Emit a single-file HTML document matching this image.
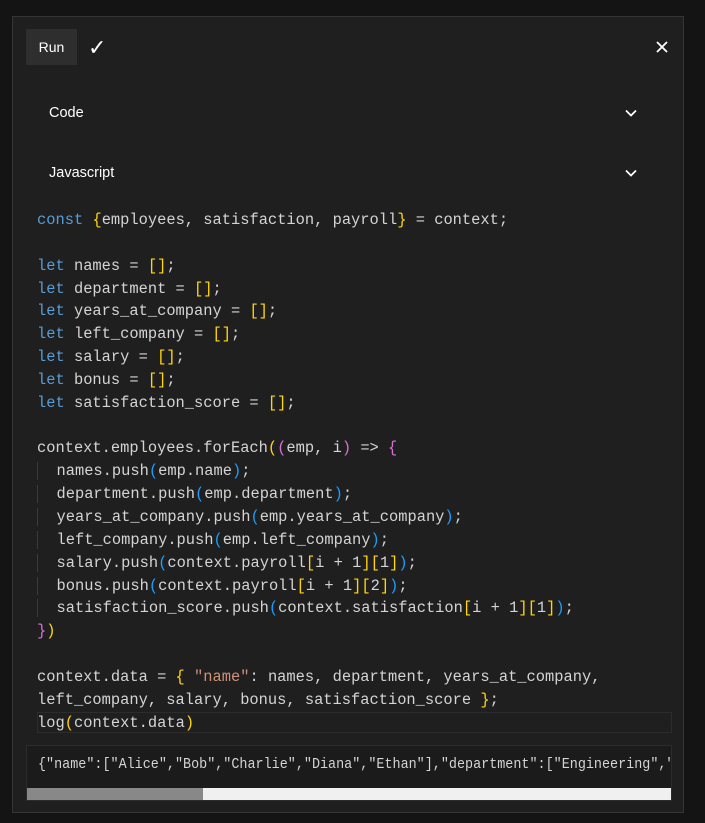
<!DOCTYPE html>
<html><head><style>
body{margin:0;width:705px;height:823px;background:#141414;position:relative;overflow:hidden;font-family:"Liberation Sans",sans-serif}
.panel{position:absolute;left:12px;top:16px;width:670px;height:795px;background:#1f1f1f;border:1px solid #353535}
.run{position:absolute;left:13px;top:12px;width:51px;height:36px;background:#2e2e2e;color:#fff;font-size:14px;line-height:36px;text-align:center}
.chk{position:absolute;left:75px;top:19px;color:#fff;font-size:22px;font-weight:bold;font-family:"DejaVu Sans",sans-serif}
.x{position:absolute;left:641px;top:22px}
.lbl{position:absolute;left:36px;color:#fff;font-size:14.5px}
.chev{position:absolute;left:611px}
pre{position:absolute;left:24px;top:192px;margin:0;font-family:"Liberation Mono",monospace;font-size:15.4px;line-height:22.85px;color:#d4d4d4}
.k{color:#569cd6}.y{color:#ffd700}.m{color:#da70d6}.b{color:#179fff}.s{color:#ce9178}
.logbox{position:absolute;left:24px;top:695px;width:633px;height:19px;border:1px solid #2c2c2c}
.out{position:absolute;left:13px;top:728px;width:644px;height:54px;background:#1b1b1b;border:1px solid #2c2c2c;overflow:hidden}
.out div.t{position:absolute;left:11px;top:11px;font-family:"Liberation Mono",monospace;font-size:14.6px;color:#d4d4d4;white-space:nowrap;transform:scaleX(0.92);transform-origin:0 0}
.track{position:absolute;left:0;top:42px;width:644px;height:12px;background:#f0f0f0}
.thumb{position:absolute;left:0;top:0;width:176px;height:12px;background:#888}
.ind{border-left:1px solid #3a3a3a}
</style></head><body>
<div class="panel">
<div class="run">Run</div>
<div class="chk">✓</div>
<svg class="x" width="16" height="16" viewBox="0 0 16 16"><path d="M3 3L13 13M13 3L3 13" stroke="#fff" stroke-width="1.8"/></svg>
<div class="lbl" style="top:88px">Code</div>
<svg class="chev" style="top:89px" width="14" height="14" viewBox="0 0 14 14"><path d="M2 4.5L7 9.5L12 4.5" stroke="#fff" stroke-width="1.7" fill="none"/></svg>
<div class="lbl" style="top:148px">Javascript</div>
<svg class="chev" style="top:149px" width="14" height="14" viewBox="0 0 14 14"><path d="M2 4.5L7 9.5L12 4.5" stroke="#fff" stroke-width="1.7" fill="none"/></svg>
<pre><span class="k">const</span> <span class="y">{</span>employees, satisfaction, payroll<span class="y">}</span> = context;

<span class="k">let</span> names = <span class="y">[]</span>;
<span class="k">let</span> department = <span class="y">[]</span>;
<span class="k">let</span> years_at_company = <span class="y">[]</span>;
<span class="k">let</span> left_company = <span class="y">[]</span>;
<span class="k">let</span> salary = <span class="y">[]</span>;
<span class="k">let</span> bonus = <span class="y">[]</span>;
<span class="k">let</span> satisfaction_score = <span class="y">[]</span>;

context.employees.forEach<span class="y">(</span><span class="m">(</span>emp, i<span class="m">)</span> =&gt; <span class="m">{</span>
<span class="ind"> </span> names.push<span class="b">(</span>emp.name<span class="b">)</span>;
<span class="ind"> </span> department.push<span class="b">(</span>emp.department<span class="b">)</span>;
<span class="ind"> </span> years_at_company.push<span class="b">(</span>emp.years_at_company<span class="b">)</span>;
<span class="ind"> </span> left_company.push<span class="b">(</span>emp.left_company<span class="b">)</span>;
<span class="ind"> </span> salary.push<span class="b">(</span>context.payroll<span class="y">[</span>i + 1<span class="y">]</span><span class="y">[</span>1<span class="y">]</span><span class="b">)</span>;
<span class="ind"> </span> bonus.push<span class="b">(</span>context.payroll<span class="y">[</span>i + 1<span class="y">]</span><span class="y">[</span>2<span class="y">]</span><span class="b">)</span>;
<span class="ind"> </span> satisfaction_score.push<span class="b">(</span>context.satisfaction<span class="y">[</span>i + 1<span class="y">]</span><span class="y">[</span>1<span class="y">]</span><span class="b">)</span>;
<span class="m">}</span><span class="y">)</span>

context.data = <span class="y">{</span> <span class="s">"name"</span>: names, department, years_at_company,
left_company, salary, bonus, satisfaction_score <span class="y">}</span>;
log<span class="y">(</span>context.data<span class="y">)</span></pre>
<div class="logbox"></div>
<div class="out"><div class="t">{"name":["Alice","Bob","Charlie","Diana","Ethan"],"department":["Engineering","Sales"]}</div>
<div class="track"><span class="thumb"></span></div></div>
</div>
</body></html>
